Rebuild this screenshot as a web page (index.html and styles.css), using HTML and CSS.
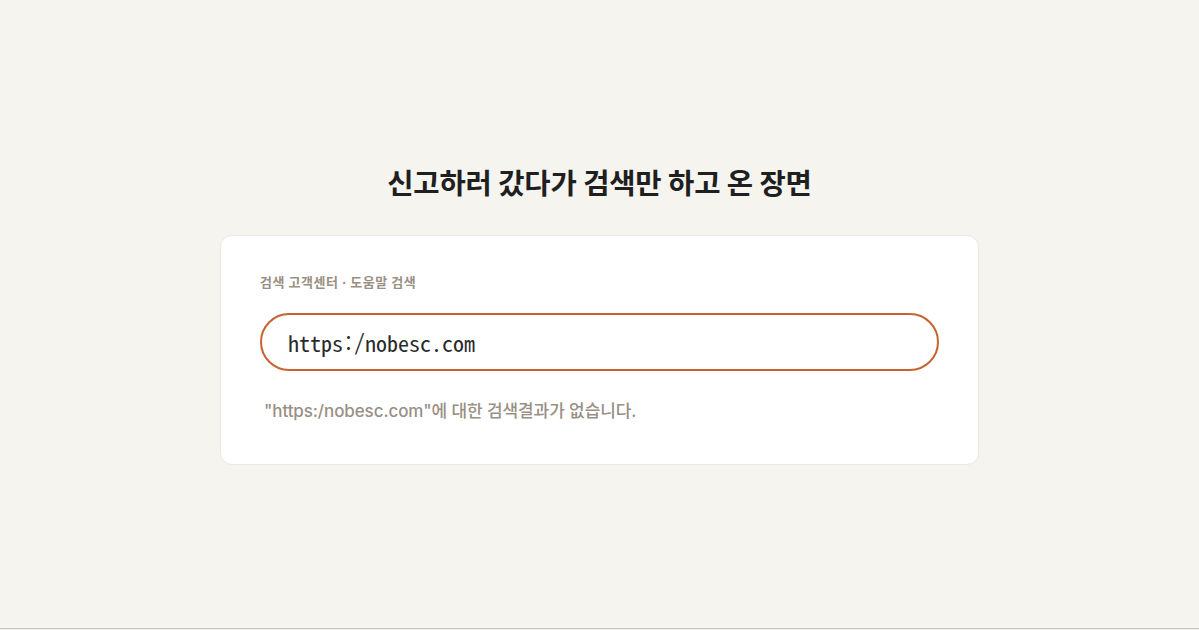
FILE: index.html
```html
<!DOCTYPE html>
<html lang="ko">
<head>
  <meta charset="UTF-8" />
  <meta name="viewport" content="width=device-width, initial-scale=1.0"/>
  <title>신고하러 갔다가 검색만 하고 온 장면</title>
  <link rel="stylesheet" href="styles.css">
</head>
<body>
  <div class="page">
    <h1 class="title">신고하러 갔다가 검색만 하고 온 장면</h1>

    <div class="card">
      <div class="label">검색 고객센터 · 도움말 검색</div>
      <div class="search-box">https:/nobesc.com</div>
      <p class="result">"https:/nobesc.com"에 대한 검색결과가 없습니다.</p>
    </div>
  </div>
</body>
</html>
```

FILE: styles.css
```css
html, body {
  margin: 0;
  padding: 0;
}

body {
  background: #f5f4ef;
  font-family: Inter, "Noto Sans CJK KR", sans-serif;
  color: #222;
}

.page {
  min-height: 629px;
  border-bottom: 1px solid #c4c1bb;
  box-sizing: border-box;
  display: flex;
  flex-direction: column;
  align-items: center;
  padding-top: 164px;
}

.title {
  margin: 0 0 31px;
  font-size: 28.6px;
  line-height: 40px;
  font-weight: 700;
  color: #1f1f1f;
  letter-spacing: -0.2px;
}

.card {
  width: 759px;
  box-sizing: border-box;
  background: #fff;
  border: 1px solid #ebe8e2;
  border-radius: 12px;
  padding: 37px 39px 41px;
}

.label {
  font-size: 13px;
  line-height: 18px;
  font-weight: 700;
  color: #9a8f83;
  letter-spacing: 0.5px;
}

.search-box {
  margin-top: 22px;
  height: 58px;
  box-sizing: border-box;
  border: 2px solid #c8632f;
  border-radius: 29px;
  padding: 0 26px;
  display: flex;
  align-items: center;
  font-family: "Noto Sans Mono CJK KR", "DejaVu Sans Mono", monospace;
  font-size: 22px;
  color: #2a2a2a;
}

.result {
  margin: 28px 0 0 4px;
  font-size: 17px;
  line-height: 24px;
  font-weight: 500;
  color: #998f85;
  letter-spacing: -0.1px;
}
```
